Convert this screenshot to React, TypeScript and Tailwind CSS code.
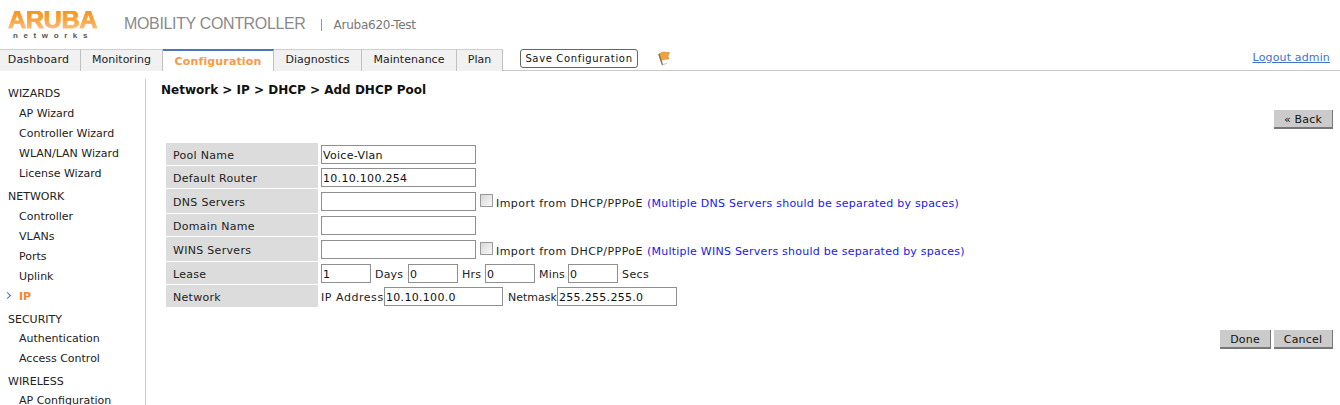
import React from 'react';

const tabs = [
  { label: 'Dashboard', w: 'w-[81px] pr-[3px] tracking-[0.2px]' },
  { label: 'Monitoring', w: 'w-[82px]' },
  { label: 'Configuration', w: 'w-[111px]', active: true },
  { label: 'Diagnostics', w: 'w-[88px]' },
  { label: 'Maintenance', w: 'w-[95px]' },
  { label: 'Plan', w: 'w-[46px]' },
];

const nav = [
  { title: 'WIZARDS', h: 'h-[21px]', items: ['AP Wizard', 'Controller Wizard', 'WLAN/LAN Wizard', 'License Wizard'] },
  { title: 'NETWORK', h: 'h-[21px]', items: ['Controller', 'VLANs', 'Ports', 'Uplink', 'IP'] },
  { title: 'SECURITY', h: 'h-[20px]', items: ['Authentication', 'Access Control'] },
  { title: 'WIRELESS', h: 'h-[20px]', items: ['AP Configuration'] },
];

const Field = ({ value = '', className = 'w-[155px]' }: { value?: string; className?: string }) => (
  <input
    readOnly
    value={value}
    className={`h-[19px] border border-[#8f8f8f] bg-white pl-[1px] pt-[2px] text-[11px] tracking-[0.3px] text-[#111] outline-none ${className}`}
  />
);

const Row = ({ label, h = 'h-[22px]', children }: { label: string; h?: string; children: React.ReactNode }) => (
  <div className={`flex mb-px ${h}`}>
    <div className="w-[152px] shrink-0 bg-[#dcdcdc] pl-[7px] pt-[4px] flex items-center tracking-[0.3px] text-[#222]">{label}</div>
    <div className="ml-[3px] flex items-center whitespace-nowrap tracking-[0.2px] text-[#222]">{children}</div>
  </div>
);

const ImportNote = ({ kind }: { kind: string }) => (
  <>
    <span className="ml-[4px] w-[13px] h-[13px] mb-[2px] border border-[#9a9a9a] bg-gradient-to-br from-[#d8d8d8] to-[#f8f8f8]" />
    <span className="ml-[3px] pt-[7px] tracking-[0.45px]">Import from DHCP/PPPoE</span>
    <span className="ml-[4px] pt-[7px] tracking-[0.24px] text-[#1a1ae0]">(Multiple {kind} Servers should be separated by spaces)</span>
  </>
);

const Logo = () => (
  <div className="w-[92px] ml-[7px] mt-[11px] flex flex-col items-center">
    <div className="h-[18px] leading-[18px] text-[23px] font-black tracking-[-0.4px] scale-x-[1.1] bg-gradient-to-b from-[#f7941d] via-[#f9a23a] to-[#fbbd77] bg-clip-text text-transparent [-webkit-text-stroke:0.8px_transparent] font-['Liberation_Sans',sans-serif]">
      ARUBA
    </div>
    <div className="mt-[2px] h-[10px] leading-[10px] text-[8px] font-bold text-[#555] tracking-[5.6px] font-['Liberation_Sans',sans-serif]">
      networks
    </div>
  </div>
);

const ActionButton = ({ label, w }: { label: string; w: string }) => (
  <button className={`${w} h-[19px] pt-[2px] bg-[#cbcbcb] border-b-2 border-r border-[#777] border-l-0 border-t-0 text-[11px] tracking-[0.2px] text-[#111]`}>
    {label}
  </button>
);

export default function App() {
  return (
    <div className="h-[405px] w-[1340px] overflow-hidden bg-white text-[11px] text-[#222] font-['DejaVu_Sans',Verdana,sans-serif]">
      {/* Header */}
      <div className="h-[49px] flex items-start">
        <Logo />
        <div className="ml-[25px] mt-[14px] text-[16px] leading-[20px] text-[#8a8a8a] font-['Liberation_Sans',sans-serif] tracking-[-0.35px]">
          MOBILITY CONTROLLER
        </div>
        <div className="ml-[15px] mt-[19px] w-px h-[12px] bg-[#999]" />
        <div className="ml-[12px] mt-[18px] text-[12px] text-[#777] leading-[15px] tracking-[-0.25px]">Aruba620-Test</div>
      </div>

      {/* Tab strip */}
      <div className="h-[22px] flex border-b border-[#c8c8c8] relative">
        {tabs.map((t) =>
          t.active ? (
            <div
              key={t.label}
              className={`${t.w} h-[22px] pt-[2px] bg-white border-t-2 border-t-[#4f74b3] border-r border-r-[#c0c0c0] flex items-center justify-center font-bold text-[#f79a4a] tracking-[0.15px]`}
            >
              {t.label}
            </div>
          ) : (
            <div
              key={t.label}
              className={`${t.w} h-[22px] bg-[#f1f1f1] border-t border-t-[#d0d0d0] border-r border-r-[#c0c0c0] flex items-center justify-center text-[#222]`}
            >
              {t.label}
            </div>
          )
        )}
        <button className="ml-[17px] mb-[3px] w-[118px] h-[19px] border border-[#666] rounded-[3px] bg-white text-[10px] tracking-[0.65px] text-[#111] font-['DejaVu_Sans',sans-serif]">
          Save Configuration
        </button>
        <svg className="ml-[18px] mt-[1px]" width="15" height="17" viewBox="0 0 15 17">
          <path d="M2.5 4 L7 2 L13.5 2.5 L12 6.5 L13 9 L7 9.5 L5 11.5 Z" fill="#f0a23c" stroke="#c77f22" strokeWidth="0.5" />
          <path d="M3 4 L6.5 15" stroke="#8a7a55" strokeWidth="1.4" fill="none" />
          <path d="M6.5 15 L11 13" stroke="#cfc9b8" strokeWidth="1" fill="none" />
        </svg>
        <a className="ml-auto mr-[10px] mb-[3px] self-center text-[#3f72c8] underline tracking-[0.15px]">Logout admin</a>
      </div>

      <div className="flex">
        {/* Sidebar */}
        <div className="w-[146px] shrink-0 mt-[8px] h-[326px] border-r border-[#c8c8c8] pl-[8px] pt-[4px]">
          {nav.map((s) => (
            <div key={s.title}>
              <div className={`${s.h} leading-[21px] text-[#222]`}>{s.title}</div>
              {s.items.map((i) =>
                i === 'IP' ? (
                  <div key={i} className="h-[20px] leading-[20px] pl-[11px] font-bold text-[#f5842f] relative">
                    <span className="absolute left-[-3px] top-[6px] w-[5px] h-[5px] border-t border-r border-[#4f74b3] rotate-45" />
                    {i}
                  </div>
                ) : (
                  <div key={i} className="h-[20px] leading-[20px] pl-[11px] text-[#222]">{i}</div>
                )
              )}
              <div className="h-[2px]" />
            </div>
          ))}
        </div>

        {/* Content */}
        <div className="flex-1 pl-[15px] pr-[7px]">
          <div className="mt-[11px] h-[16px] leading-[16px] text-[12px] font-bold text-[#111]">
            Network &gt; IP &gt; DHCP &gt; Add DHCP Pool
          </div>
          <div className="mt-[12px] flex justify-end">
            <ActionButton label="« Back" w="w-[59px]" />
          </div>
          <div className="mt-[14px] ml-[5px]">
            <Row label="Pool Name"><Field value="Voice-Vlan" /></Row>
            <Row label="Default Router"><Field value="10.10.100.254" /></Row>
            <Row label="DNS Servers" h="h-[24px]"><Field /><ImportNote kind="DNS" /></Row>
            <Row label="Domain Name"><Field /></Row>
            <Row label="WINS Servers" h="h-[24px]"><Field /><ImportNote kind="WINS" /></Row>
            <Row label="Lease">
              <Field value="1" className="w-[50px]" />
              <span className="ml-[4px] pt-[4px] w-[33px]">Days</span>
              <Field value="0" className="w-[50px]" />
              <span className="ml-[4px] pt-[4px] w-[23px]">Hrs</span>
              <Field value="0" className="w-[50px]" />
              <span className="ml-[4px] pt-[4px] w-[29px]">Mins</span>
              <Field value="0" className="w-[50px]" />
              <span className="ml-[4px] pt-[4px] tracking-[0.4px]">Secs</span>
            </Row>
            <Row label="Network">
              <span className="w-[63px] pt-[4px] tracking-[0.55px]">IP Address</span>
              <Field value="10.10.100.0" className="w-[119px]" />
              <span className="ml-[5px] pt-[4px] w-[49px] tracking-normal">Netmask</span>
              <Field value="255.255.255.0" className="w-[120px]" />
            </Row>
          </div>
          <div className="mt-[23px] flex justify-end gap-[3px]">
            <ActionButton label="Done" w="w-[51px]" />
            <ActionButton label="Cancel" w="w-[59px]" />
          </div>
        </div>
      </div>
    </div>
  );
}
